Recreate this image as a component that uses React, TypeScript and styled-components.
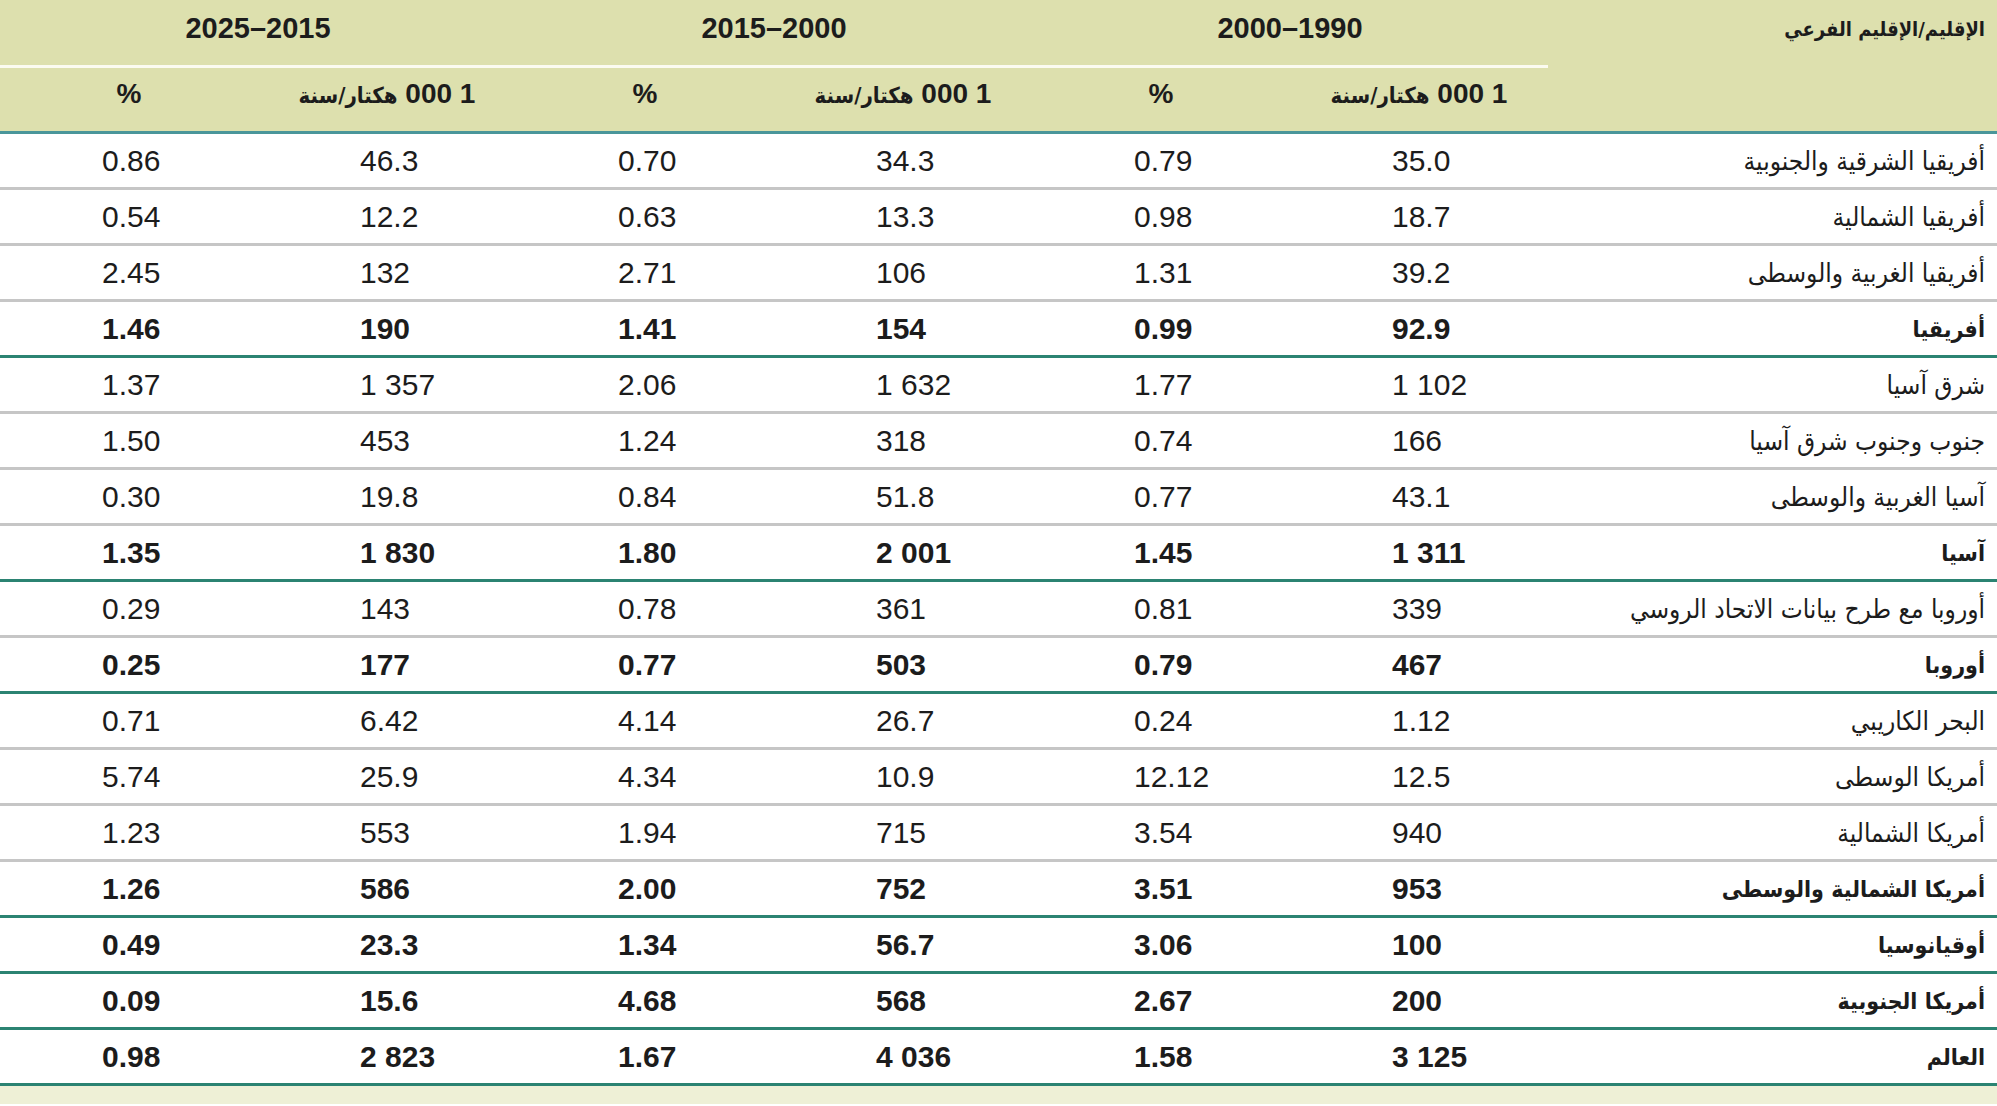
import React from "react";
import styled, { createGlobalStyle, css } from "styled-components";

const GlobalStyle = createGlobalStyle`
    html, body {
        margin: 0;
        padding: 0;
        background: #ffffff;
    }
    body {
        font-family: "Liberation Sans", Arial, "DejaVu Sans Condensed", "DejaVu Sans", sans-serif;
        color: #1c1c1c;
    }
`;

const COLS = "449px repeat(6, 258px)";
const ARABIC = `"DejaVu Sans Condensed", "DejaVu Sans", sans-serif`;

const Page = styled.section`
    width: 1997px;
    direction: rtl;
`;

const Head = styled.header`
    display: grid;
    grid-template-columns: ${COLS};
    grid-template-rows: 68px 66px;
    background-color: #dde0ae;
    border-bottom: 3px solid #4a969a;
    box-sizing: border-box;
    height: 134px;
`;

const RegionHead = styled.div`
    grid-row: 1 / span 2;
    padding: 17px 12px 0 0;
    font-family: ${ARABIC};
    font-stretch: condensed;
    font-size: 20px;
    font-weight: 700;
    text-align: right;
`;

const GroupHead = styled.div`
    grid-column: span 2;
    display: flex;
    justify-content: center;
    padding-top: 12px;
    border-bottom: 3px solid #fbfbf0;
    font-size: 29px;
    font-weight: 700;
    direction: ltr;
`;

const SubHead = styled.div`
    text-align: center;
    line-height: 52px;
    font-size: 28px;
    font-weight: 700;
    white-space: nowrap;
`;

const Unit = styled.span`
    font-family: ${ARABIC};
    font-stretch: condensed;
    font-size: 22px;
`;

const Row = styled.div<{ $bold?: boolean; $group?: boolean }>`
    display: grid;
    grid-template-columns: ${COLS};
    height: 56px;
    box-sizing: border-box;
    border-bottom: 3px solid #c6c6c6;
    font-weight: ${(p) => (p.$bold ? 700 : 400)};
    ${(p) =>
        p.$group &&
        css`
            border-bottom-color: #2b8372;
        `}
`;

const Label = styled.div<{ $bold?: boolean }>`
    display: flex;
    align-items: center;
    padding-right: 12px;
    font-family: ${ARABIC};
    font-stretch: condensed;
    font-size: ${(p) => (p.$bold ? "23px" : "26px")};
    white-space: nowrap;
`;

const Num = styled.div`
    display: flex;
    align-items: center;
    direction: ltr;
    padding-left: 102px;
    font-size: 30px;
    white-space: nowrap;
`;

const Footer = styled.footer`
    height: 18px;
    background-color: #eef0d6;
`;

type Line = {
    name: string;
    v: string[];
    bold?: boolean;
    group?: boolean;
};

const rows: Line[] = [
    { name: "أفريقيا الشرقية والجنوبية", v: ["35.0", "0.79", "34.3", "0.70", "46.3", "0.86"] },
    { name: "أفريقيا الشمالية", v: ["18.7", "0.98", "13.3", "0.63", "12.2", "0.54"] },
    { name: "أفريقيا الغربية والوسطى", v: ["39.2", "1.31", "106", "2.71", "132", "2.45"] },
    { name: "أفريقيا", v: ["92.9", "0.99", "154", "1.41", "190", "1.46"], bold: true, group: true },
    { name: "شرق آسيا", v: ["1 102", "1.77", "1 632", "2.06", "1 357", "1.37"] },
    { name: "جنوب وجنوب شرق آسيا", v: ["166", "0.74", "318", "1.24", "453", "1.50"] },
    { name: "آسيا الغربية والوسطى", v: ["43.1", "0.77", "51.8", "0.84", "19.8", "0.30"] },
    { name: "آسيا", v: ["1 311", "1.45", "2 001", "1.80", "1 830", "1.35"], bold: true, group: true },
    { name: "أوروبا مع طرح بيانات الاتحاد الروسي", v: ["339", "0.81", "361", "0.78", "143", "0.29"] },
    { name: "أوروبا", v: ["467", "0.79", "503", "0.77", "177", "0.25"], bold: true, group: true },
    { name: "البحر الكاريبي", v: ["1.12", "0.24", "26.7", "4.14", "6.42", "0.71"] },
    { name: "أمريكا الوسطى", v: ["12.5", "12.12", "10.9", "4.34", "25.9", "5.74"] },
    { name: "أمريكا الشمالية", v: ["940", "3.54", "715", "1.94", "553", "1.23"] },
    { name: "أمريكا الشمالية والوسطى", v: ["953", "3.51", "752", "2.00", "586", "1.26"], bold: true, group: true },
    { name: "أوقيانوسيا", v: ["100", "3.06", "56.7", "1.34", "23.3", "0.49"], bold: true, group: true },
    { name: "أمريكا الجنوبية", v: ["200", "2.67", "568", "4.68", "15.6", "0.09"], bold: true, group: true },
    { name: "العالم", v: ["3 125", "1.58", "4 036", "1.67", "2 823", "0.98"], bold: true, group: true },
];

const periods = ["2000–1990", "2015–2000", "2025–2015"];

export default function App() {
    return (
        <>
            <GlobalStyle />
            <Page>
                <Head>
                    <RegionHead>الإقليم/الإقليم الفرعي</RegionHead>
                    {periods.map((p) => (
                        <GroupHead key={p}>{p}</GroupHead>
                    ))}
                    {periods.map((p) => (
                        <React.Fragment key={p}>
                            <SubHead>
                                1 000 <Unit>هكتار/سنة</Unit>
                            </SubHead>
                            <SubHead>%</SubHead>
                        </React.Fragment>
                    ))}
                </Head>
                {rows.map((r) => (
                    <Row key={r.name} $bold={r.bold} $group={r.group}>
                        <Label $bold={r.bold}>{r.name}</Label>
                        {r.v.map((x, i) => (
                            <Num key={i}>{x}</Num>
                        ))}
                    </Row>
                ))}
                <Footer />
            </Page>
        </>
    );
}
